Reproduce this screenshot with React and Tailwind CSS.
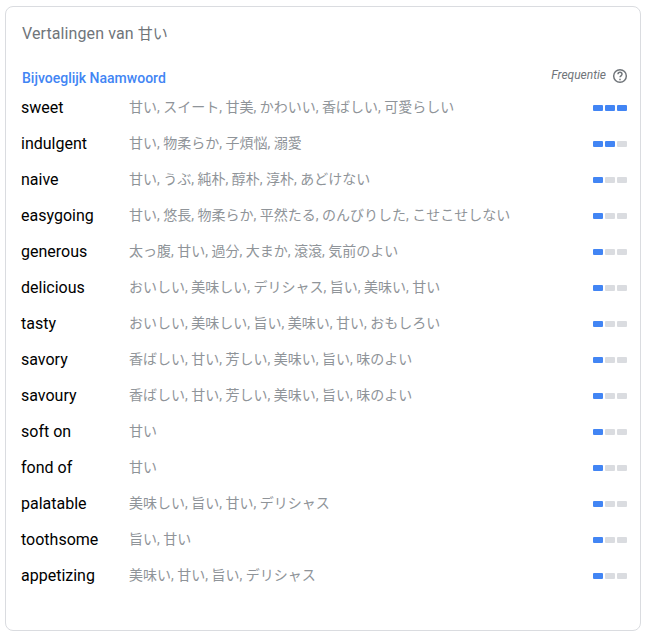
import React from 'react';

const rows = [
    ['sweet', '甘い, スイート, 甘美, かわいい, 香ばしい, 可愛らしい', 3],
    ['indulgent', '甘い, 物柔らか, 子煩悩, 溺愛', 2],
    ['naive', '甘い, うぶ, 純朴, 醇朴, 淳朴, あどけない', 1],
    ['easygoing', '甘い, 悠長, 物柔らか, 平然たる, のんびりした, こせこせしない', 1],
    ['generous', '太っ腹, 甘い, 過分, 大まか, 滾滾, 気前のよい', 1],
    ['delicious', 'おいしい, 美味しい, デリシャス, 旨い, 美味い, 甘い', 1],
    ['tasty', 'おいしい, 美味しい, 旨い, 美味い, 甘い, おもしろい', 1],
    ['savory', '香ばしい, 甘い, 芳しい, 美味い, 旨い, 味のよい', 1],
    ['savoury', '香ばしい, 甘い, 芳しい, 美味い, 旨い, 味のよい', 1],
    ['soft on', '甘い', 1],
    ['fond of', '甘い', 1],
    ['palatable', '美味しい, 旨い, 甘い, デリシャス', 1],
    ['toothsome', '旨い, 甘い', 1],
    ['appetizing', '美味い, 甘い, 旨い, デリシャス', 1],
];

const FrequencyBar = ({ level }) => (
    <div className="flex gap-[2px]">
        {[0, 1, 2].map((i) => (
            <div
                key={i}
                className={`w-[10px] h-[6px] rounded-[1px] ${i < level ? 'bg-[#4285f4]' : 'bg-[#dadce0]'}`}
            />
        ))}
    </div>
);

const App = () => {
    return (
        <div className="w-[651px] h-[637px] bg-white pt-[6px] pl-[5px] font-['Roboto','Noto_Sans_CJK_JP',sans-serif]">
            <div className="w-[636px] h-[625px] border border-[#dadce0] rounded-lg pl-[15px] pr-[13px] pt-[16px]">
                <div className="pl-px text-[16px] leading-[22px] tracking-[0.1px] text-[#70757a]">
                    Vertalingen van <span className="text-[15px] text-[#70757a]">甘い</span>
                </div>
                <div className="flex justify-between items-start mt-[13px]">
                    <div className="pl-px pt-[10px] text-[14px] leading-[20px] font-medium text-[#4285f4]">
                        Bijvoeglijk Naamwoord
                    </div>
                    <div className="flex items-center gap-[6px] pt-[8px]">
                        <span className="text-[12px] leading-[16px] italic text-[#70757a]">Frequentie</span>
                        <svg className="-mr-px mt-[2px]" width="16" height="16" viewBox="0 0 24 24" fill="none" stroke="#70757a" strokeWidth="2.2">
                            <circle cx="12" cy="12" r="9.5" />
                            <path d="M9 9.5a3 3 0 0 1 6 0c0 2-3 2.5-3 4.5" />
                            <path d="M12 16.2v2" />
                        </svg>
                    </div>
                </div>
                <div className="mt-[2px]">
                    {rows.map(([word, synonyms, level]) => (
                        <div key={word} className="flex items-center h-[36px]">
                            <div className="w-[108px] text-[16px] text-black">{word}</div>
                            <div className="flex-1 pb-[2px] text-[14px] text-[#8f9499]">{synonyms}</div>
                            <FrequencyBar level={level} />
                        </div>
                    ))}
                </div>
            </div>
        </div>
    );
};

export default App;
